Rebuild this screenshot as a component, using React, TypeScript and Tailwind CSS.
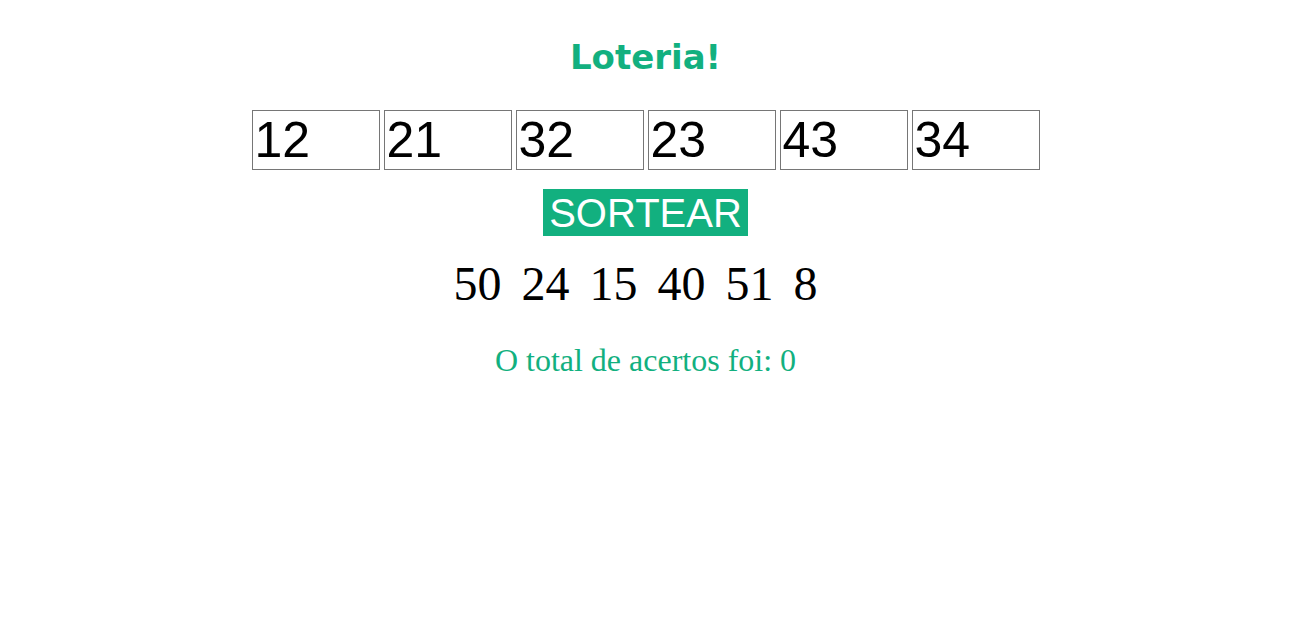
import { useState } from 'react';

const App = () => {
  const [palpites, setPalpites] = useState(['12', '21', '32', '23', '43', '34']);
  const [sorteados] = useState([50, 24, 15, 40, 51, 8]);
  const acertos = 0;

  const handleChange = (i: number, value: string) => {
    const novos = [...palpites];
    novos[i] = value;
    setPalpites(novos);
  };

  return (
    <div className="w-[1291px] min-h-[623px] bg-white flex flex-col items-center">
      {/* Título */}
      <h1 className="mt-[36px] text-[34px] leading-[42px] font-bold text-[#12b07f] font-['Comic_Sans_MS','DejaVu_Sans',sans-serif]">
        Loteria!
      </h1>

      {/* Palpites */}
      <div className="mt-[32px] flex gap-[4px]">
        {palpites.map((p, i) => (
          <input
            key={i}
            type="text"
            value={p}
            onChange={(e) => handleChange(i, e.target.value)}
            className="w-[128px] h-[60px] px-[2px] py-[1px] border border-[#767676] text-[50px] text-black outline-none font-['Liberation_Sans',Arial,sans-serif]"
          />
        ))}
      </div>

      {/* Botão */}
      <button
        type="button"
        className="mt-[19px] h-[47px] px-[6px] bg-[#12b07f] text-white text-[40px] leading-[46px] font-['Liberation_Sans',Arial,sans-serif]"
      >
        SORTEAR
      </button>

      {/* Números sorteados */}
      <div className="mt-[20px] flex text-[48px] leading-[55px] text-black font-['Liberation_Serif','Times_New_Roman',serif]">
        {sorteados.map((n, i) => (
          <span key={i} className="mr-[20px]">
            {n}
          </span>
        ))}
      </div>

      {/* Resultado */}
      <p className="mt-[31px] text-[32px] leading-[37px] text-[#12b07f] font-['Liberation_Serif','Times_New_Roman',serif]">
        O total de acertos foi: {acertos}
      </p>
    </div>
  );
};

export default App;
